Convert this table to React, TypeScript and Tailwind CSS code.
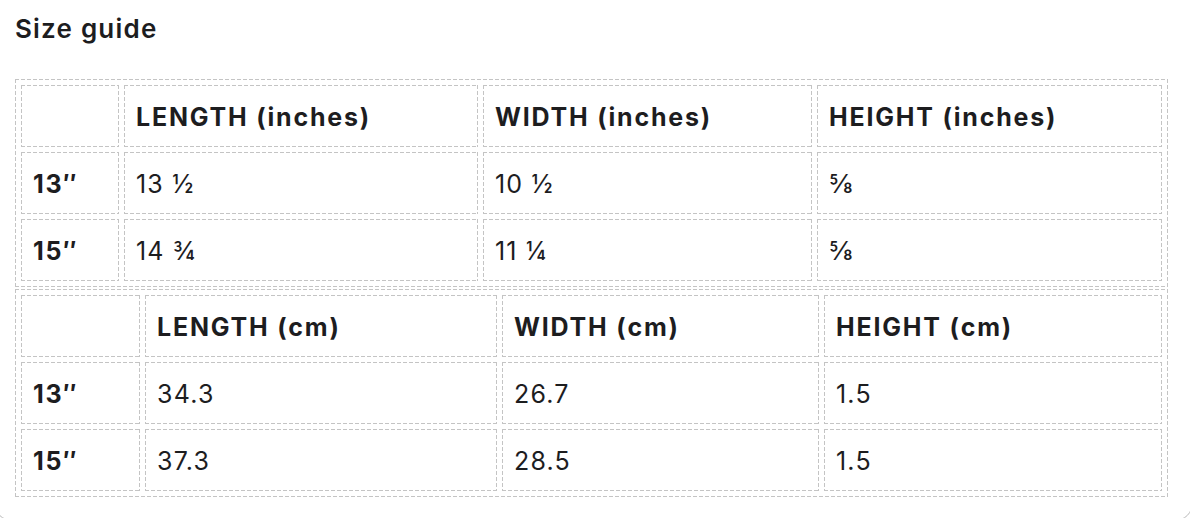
import React from "react";

type Table = {
  unit: string;
  cols: string[]; // column widths, border-box
  rows: { size: string; values: string[] }[];
};

const TABLES: Table[] = [
  {
    unit: "inches",
    cols: ["w-[98px]", "w-[354px]", "w-[329px]", "w-[345px]"],
    rows: [
      { size: "13″", values: ["13 ½", "10 ½", "⅝"] },
      { size: "15″", values: ["14 ¾", "11 ¼", "⅝"] },
    ],
  },
  {
    unit: "cm",
    cols: ["w-[119px]", "w-[352px]", "w-[317px]", "w-[338px]"],
    rows: [
      { size: "13″", values: ["34.3", "26.7", "1.5"] },
      { size: "15″", values: ["37.3", "28.5", "1.5"] },
    ],
  },
];

// longer dashes than the browser's own 1px dashed border
const dashed =
  "bg-no-repeat [background-image:repeating-linear-gradient(90deg,#c4c4c4_0_4px,transparent_4px_6px),repeating-linear-gradient(90deg,#c4c4c4_0_4px,transparent_4px_6px),repeating-linear-gradient(180deg,#c4c4c4_0_4px,transparent_4px_6px),repeating-linear-gradient(180deg,#c4c4c4_0_4px,transparent_4px_6px)] [background-size:100%_1px,100%_1px,1px_100%,1px_100%] [background-position:0_0,0_100%,0_0,100%_0]";

const cell =
  dashed + " h-[62px] px-[12px] pt-[17px] pb-[11px] align-top text-left leading-[30px]";

function SizeTable({ table, className }: { table: Table; className?: string }) {
  const heads = ["LENGTH", "WIDTH", "HEIGHT"];
  return (
    <table
      className={
        dashed +
        " table-fixed w-[1153px] p-px border-separate border-spacing-[5px] " +
        (className || "")
      }
    >
      <colgroup>
        {table.cols.map((c, i) => (
          <col key={i} className={c} />
        ))}
      </colgroup>
      <tbody>
        <tr>
          <td className={cell}></td>
          {heads.map((h) => (
            <th key={h} className={cell + " font-bold tracking-[1.8px]"}>
              {h} ({table.unit})
            </th>
          ))}
        </tr>
        {table.rows.map((r) => (
          <tr key={r.size}>
            <th className={cell + " font-bold tracking-[1.6px]"}>{r.size}</th>
            {r.values.map((v, i) => (
              <td key={i} className={cell}>
                {v}
              </td>
            ))}
          </tr>
        ))}
      </tbody>
    </table>
  );
}

export default function App() {
  return (
    <div className="h-[518px] w-[1190px] overflow-hidden bg-white font-['Inter',sans-serif] text-[25px] tracking-[1.2px] text-[#1d1d1f]">
      {/* card edges sit mostly off screen, only the bottom corners show */}
      <div className="-mt-[20px] -ml-[6px] w-[1199px] h-[541px] rounded-[18px] border border-[#b9b9b9] pl-[20px] pt-[32px]">
        <h2 className="text-[26px] leading-[32px] font-semibold tracking-[1.2px]">Size guide</h2>
        <SizeTable table={TABLES[0]} className="mt-[34px]" />
        <SizeTable table={TABLES[1]} className="mt-[2px]" />
      </div>
    </div>
  );
}
